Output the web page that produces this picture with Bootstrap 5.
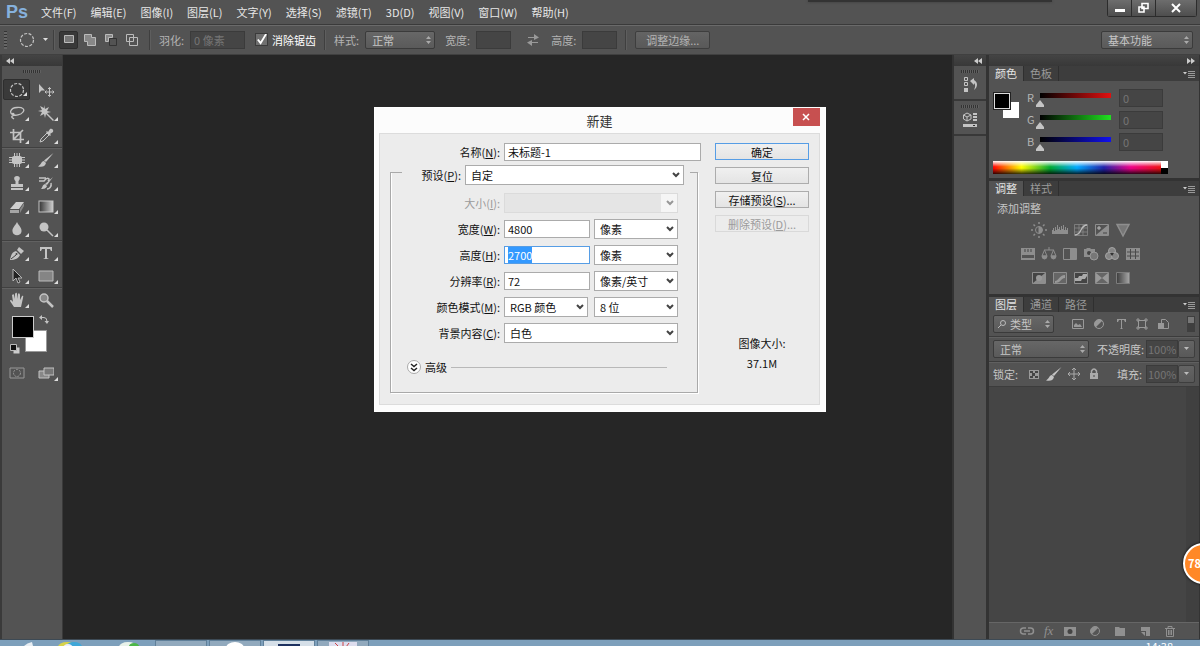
<!DOCTYPE html>
<html lang="zh-CN">
<head>
<meta charset="utf-8">
<meta name="viewport" content="width=device-width, initial-scale=1">
<title>新建</title>
<link href="https://cdn.jsdelivr.net/npm/bootstrap@5.3.0/dist/css/bootstrap.min.css" rel="stylesheet">
<style>
:root{--panel:#535353;--dark:#383838;--ink:#b4b4b4}
body{font-family:"Noto Sans CJK SC",sans-serif;font-size:11px;line-height:16px;background:#262626;color:#ddd}
button,input,select{font:inherit;color:inherit}
svg{display:block}
svg:not([fill]){fill:none}
.i16{width:16px;height:16px;flex:none}
.plain{background:none;border:0;padding:0;display:flex;align-items:center;justify-content:center}

.menubar{height:24px;background:var(--panel)}
.menubar a{color:#e8e8e8;text-decoration:none}
.brand{width:41px;padding-left:6px;font:bold 18px/22px "Liberation Sans",sans-serif;color:#86b1dd}
.topshade{left:808px;width:244px;height:2px;background:#333;box-shadow:0 0 3px #3a3a3a}
.winbtns{height:17px;margin-right:3px;border:1px solid #2c2c2c;border-top:0;border-radius:0 0 3px 3px}
.winbtns button{width:24px;height:16px;background:linear-gradient(#6d6d6d,#4e4e4e);border-right:1px solid #2c2c2c}
.winbtns button:last-child{width:40px;border-right:0}

.optbar{height:31px;background:var(--panel);border-top:1px solid #3a3a3a;box-shadow:inset 0 1px #6a6a6a;border-bottom:1px solid #404040;color:var(--ink)}
.optbar label{white-space:nowrap}
.optbar .cap{margin-right:6px}
.after{margin-right:10px}
.vgrip{width:3px;height:18px;margin:0 12px 0 4px;background:repeating-linear-gradient(#333 0 1px,#666 1px 3px)}
.vsep{width:2px;height:20px;background:#3f3f3f;border-right:1px solid #5e5e5e}
.modes{gap:2px}
.mode{width:19px;height:18px;border-radius:2px}
.mode.on{background:#393939;border:1px solid #2e2e2e}
.dfield{height:18px;background:#454545;border:1px solid #3b3b3b;color:#757575;padding:0 0 0 3px;border-radius:0;min-width:0}
.dselect{height:18px;appearance:none;border:1px solid #3b3b3b;border-radius:2px;padding:0 12px 0 6px;line-height:14px;color:#c6c6c6;
 background:url("data:image/svg+xml,%3Csvg xmlns='http://www.w3.org/2000/svg' width='7' height='8'%3E%3Cpath d='M3.500 0L6 3H1zM3.500 8L6 5H1z' fill='%23aaa'/%3E%3C/svg%3E") no-repeat right 2px center,linear-gradient(#676767,#5a5a5a)}
.dbtn{height:18px;border:1px solid #3e3e3e;border-radius:2px;background:linear-gradient(#646464,#595959);color:var(--ink);padding:0;line-height:14px}
.tick{appearance:none;width:13px;height:13px;margin:0;border:1px solid #3b3b3b;background:#707070 url("data:image/svg+xml,%3Csvg xmlns='http://www.w3.org/2000/svg' viewBox='0 0 12 12'%3E%3Cpath d='M2 6l3 4L11 0' stroke='%23fff' stroke-width='2' fill='none'/%3E%3C/svg%3E") center/11px no-repeat}

.dockhead{height:11px;flex:none;background:linear-gradient(#444,#383838);color:#ccc}
.toolcol{width:63px;background:var(--panel);border-left:2px solid #3a3a3a;border-right:1px solid #3a3a3a}
.hgrip{width:18px;height:3px;background:repeating-linear-gradient(90deg,#333 0 1px,#606060 1px 2px)}
.toolcol .hgrip{margin:4px auto 5px}
.toolgrid{display:grid;grid-template-columns:29px 29px;border-bottom:1px solid #404040;box-shadow:0 1px #616161}
.toolgrid button{height:23px;position:relative}
.toolgrid button.on{background:#3a3a3a;border:1px solid #2e2e2e;border-radius:2px;height:21px;margin:1px}
.more::after{content:"";position:absolute;right:2px;bottom:3px;border:2px solid transparent;border-right-color:#ddd;border-bottom-color:#ddd}
.swatches{height:42px}
.sw{position:absolute;width:22px;height:22px;border:1px solid #999}

.strip{width:34px;background:var(--panel);border-left:2px solid #333}
.strip .cell{height:35px;border-bottom:2px solid var(--dark)}
.dock{width:214px;border-left:3px solid #333;background:var(--panel);border-right:1px solid #333}
.tabs{height:15px;background:#3d3d3d;color:#9a9a9a}
.tabs a{color:inherit;text-decoration:none;padding:0 6px;border-right:1px solid #2f2f2f;line-height:14px}
.tabs a.on{background:var(--panel);color:#e4e4e4}
.pane{border-bottom:3px solid #333}
.chans{padding:8px 4px 6px}
.chan{height:22px;color:var(--ink)}
.chan label{width:9px}
.chan input[type=range]{appearance:none;width:79px;height:14px;margin:0;background:linear-gradient(90deg,#000,var(--c)) 4px 0/71px 5px no-repeat}
.chan input::-webkit-slider-thumb{appearance:none;width:8px;height:7px;margin-top:7px;background:#c4c4c4;clip-path:polygon(50% 0,100% 70%,100% 100%,0 100%,0 70%)}
.chan .dfield{width:44px}
.pair{width:26px;height:26px}
.fgc{position:absolute;left:1px;top:0;width:16px;height:16px;background:#000;border:1px solid #ddd;outline:1px solid #222}
.bgc{position:absolute;left:10px;top:9px;width:16px;height:16px;background:#fff}
.spectrum{width:168px;height:13px;background:linear-gradient(#fff,transparent 45%,transparent 55%,#000c),linear-gradient(90deg,#f00,#ff0 17%,#0a3 34%,#0af 50%,#22a 66%,#e08 82%,#e11)}
.bwend{width:7px;height:13px;background:linear-gradient(#fff 50%,#000 50%)}
.adjtitle{padding:4px 8px 2px;color:#c6c6c6}
.adj{height:24px;gap:5px;margin-right:27px;color:#8e8e8e}
.lrow{height:25px;border-bottom:1px solid #3c3c3c;box-shadow:0 1px #606060;color:#c6c6c6;white-space:nowrap}
.lrow .dfield{width:32px;padding-left:1px}
.lrow .drop{width:17px;height:18px}
.list{background:#454545;border-right:13px solid #404040}
.foot{height:17px;color:#909090;border-top:1px solid #666;padding:0 21px 0 30px}
.fx{font:italic 13px/16px "Liberation Serif",serif}

.taskbar{height:7px;background:#7d9fbb;border-top:1px solid #3d4a55;overflow:hidden}
.tasks{gap:2px}
.task{width:52px;height:7px;background:#91a9bd;border:1px solid #5f7f99;border-bottom:0}
.task.on{background:#d5dfe8}
.clock{color:#fff;line-height:12px;margin-right:27px}

.dlg{top:107px;width:452px;background:#fcfcfc;color:#111;border:1px solid #fff;padding:0 5px 6px 4px}
.dlgtitle{height:25px;font-size:13px;line-height:25px;color:#333}
.dlgclose{position:absolute;top:0;right:5px;width:27px;height:18px;background:#c75050}
.dlgbody{background:#ececec;border:1px solid #dcdcdc;padding:9px 10px 11px}
.lab{width:110px;text-align:right;white-space:nowrap}
.group .lab{width:109px}
.off{color:#9b9b9b}
.wfield,.wselect{height:18px;border:1px solid #ababab;background:#fff;border-radius:0;padding:0 3px;line-height:16px;min-width:0;outline:0}
.wfield{width:86px}
.wfield:focus{border-color:#569de5}
.wfield::selection{background:#3399ff;color:#fff}
.wselect{height:20px;width:84px;appearance:none;padding:0 16px 0 5px;line-height:18px;background:url("data:image/svg+xml,%3Csvg xmlns='http://www.w3.org/2000/svg' width='8' height='6'%3E%3Cpath d='M1 1l3 3 3-3' stroke='%23444' stroke-width='2' fill='none'/%3E%3C/svg%3E") no-repeat right 3px center,linear-gradient(90deg,var(--fill,#fff) calc(100% - 16px),#fff 0)}
.wselect:disabled{--fill:#e0e0e0;border-color:#ccc;opacity:.5}
.wide{width:174px}
.group{border:1px solid #a9a9a9;box-shadow:1px 1px #fff,inset 1px 0 #fff;width:308px;height:228px;padding:0;margin:0}
.group legend{float:none;width:288px;height:14px;margin:0 0 0 11px;padding:0;font-size:11px;line-height:16px}
.rows{gap:6px;padding-top:14px}
.wbtn{height:17px;width:94px;padding:0;border:1px solid #acacac;background:linear-gradient(#f0f0f0,#e4e4e4);line-height:14px}
.wbtn.main{border-color:#569de5}
.wbtn:disabled{border-color:#d9d9d9;background:#ececec;color:#9b9b9b}
.round{width:14px;height:14px;border:1px solid #aaa;border-radius:50%;background:#fff}
.rule{width:216px;height:1px;background:#b8b8b8}
.size{padding-bottom:22px}
.ball{right:-24px;top:543px;width:41px;height:41px;border-radius:50%;background:#ff8827;border:2px solid #fff;box-shadow:0 0 3px #000;color:#fff;font-weight:bold;line-height:36px;padding-left:3px}
</style>
</head>
<body class="vh-100 d-flex flex-column overflow-hidden position-relative">

<svg width="0" height="0" class="position-absolute" aria-hidden="true">
<defs>
<linearGradient id="gr"><stop offset="0" stop-color="#333"/><stop offset="1" stop-color="#ccc"/></linearGradient>
<symbol id="ell" viewBox="0 0 16 16"><circle cx="8" cy="8" r="6.500" stroke="#c4c4c4" stroke-dasharray="3 1.500" stroke-width="1.200"/></symbol>
<symbol id="move" viewBox="0 0 16 16"><path d="M1 2v9l2.500-2.500H7z" fill="#c4c4c4"/><path d="M11.500 5.500v9M7 10h9M10 7l1.500-1.500L13 7M10 13l1.500 1.500L13 13M8.500 8.500L7 10l1.500 1.500M14.500 8.500L16 10l-1.500 1.500" stroke="#c4c4c4"/></symbol>
<symbol id="lasso" viewBox="0 0 16 16"><path d="M4 10C0 8 1 3 8 2.500c6-.5 8 2 6 4.500-2 3-8 4-10 2.500-2-1 1-2 1 0s-3 1-2 3l2 1.500" stroke="#c4c4c4" stroke-width="1.300"/></symbol>
<symbol id="wand" viewBox="0 0 16 16"><path d="M6 0l1 4 4-2-2 4 4 1-4 1 7 7-1 1-7-7-1 4-1-4-4 2 2-4-4-1 4-1-2-4 4 2z" fill="#c4c4c4"/></symbol>
<symbol id="crop" viewBox="0 0 16 16"><path d="M4.500 1v10.500H15M1 4.500h10.500V15M14 2L5 11" stroke="#c4c4c4" stroke-width="1.700"/></symbol>
<symbol id="drop" viewBox="0 0 16 16"><path d="M2 14l1-3 6-6 2 2-6 6z" stroke="#c4c4c4"/><path d="M8 4l1-1 1 1 2-3c2-1 4 1 3 3l-3 2 1 1-1 1z" fill="#c4c4c4"/></symbol>
<symbol id="heal" viewBox="0 0 16 16"><rect x="3" y="4" width="10" height="8" rx="2" fill="#c4c4c4"/><path d="M5.500 1v14M8 1v14M10.500 1v14M0 5.500h16M0 8h16M0 10.500h16" stroke="#c4c4c4"/></symbol>
<symbol id="brush" viewBox="0 0 16 16"><path d="M15.500 1L8 10 6 8.500zM6 9l2 2c-1 4-4 4-8 3.500C3 13 3 9.500 6 9z" fill="#c4c4c4"/></symbol>
<symbol id="stamp" viewBox="0 0 16 16"><path d="M8 1c4 0 3 4 1.500 5v3H14v3H2V9h4.500V6C5 5 4 1 8 1zM2 13h12v2H2z" fill="#c4c4c4"/></symbol>
<symbol id="hist" viewBox="0 0 16 16"><path d="M15 2l-6 8-2-1zM7 9l2 2c-1 3-4 3-6 3 2-2 1-4 4-5z" fill="#c4c4c4"/><path d="M1 3h7M1 6h5c3-4 7-3 4 0M13 8c1 4-2 6-4 6" stroke="#c4c4c4" stroke-width="1.500"/></symbol>
<symbol id="erase" viewBox="0 0 16 16"><path d="M1 11l6-7h8l-5 7z" fill="#d0d0d0"/><path d="M1 12h9v3H1z" fill="#a5a5a5"/><path d="M11 11l4-6v3l-4 7z" fill="#888"/></symbol>
<symbol id="grad" viewBox="0 0 16 16"><rect x="1" y="3" width="14" height="11" fill="url(#gr)" stroke="#c4c4c4"/></symbol>
<symbol id="blur" viewBox="0 0 16 16"><path d="M8 1c2 4 5 6 4.500 9.500-.5 5-8.500 5-9 0C3 7 6 5 8 1z" fill="#c4c4c4"/></symbol>
<symbol id="dodge" viewBox="0 0 16 16"><circle cx="6" cy="6" r="4.500" fill="#c4c4c4"/><path d="M9 9l6 6" stroke="#c4c4c4" stroke-width="1.500"/></symbol>
<symbol id="pen" viewBox="0 0 16 16"><path d="M1 15c1-5 2-8 6-9l4 4c-1 3-5 5-10 5zM8 5l2-3 5 4-3 3z" fill="#c4c4c4"/><path d="M2 14l5-4" stroke="#444"/><circle cx="7.500" cy="9" r="1" fill="#444"/></symbol>
<symbol id="arrow" viewBox="0 0 16 16"><path d="M4 1v12l3-3 2 5 2-1-2-4h4z" fill="#222" stroke="#b5b5b5"/></symbol>
<symbol id="rect" viewBox="0 0 16 16"><path d="M1 3h14v10H1z" fill="#858585" stroke="#bbb"/></symbol>
<symbol id="tee" viewBox="0 0 16 16"><path d="M2 2h12v4h-1l-1-2H9v9l2 1H5l2-1V4H4L3 6H2z" fill="#c4c4c4"/></symbol>
<symbol id="hand" viewBox="0 0 16 16"><path d="M5 15L1 9c0-2 2-1 3 1L3 3c1-1 2-1 2 0l1 4V2c1-2 2-1 2 0v5l1-5c1-2 2 0 2 1v5l2-4c2-1 1 1 1 2l-2 9z" fill="#c4c4c4"/></symbol>
<symbol id="zoom" viewBox="0 0 16 16"><circle cx="6" cy="6" r="4" fill="#888" stroke="#c4c4c4" stroke-width="1.500"/><path d="M9 9l6 6" stroke="#c4c4c4" stroke-width="2.500"/></symbol>
<symbol id="mask" viewBox="0 0 16 16"><path d="M1 3h14v10H1z" stroke="#999"/><circle cx="8" cy="8" r="3.500" stroke="#999" stroke-dasharray="2 1"/></symbol>
<symbol id="screen" viewBox="0 0 16 16"><path d="M1 6h10v7H1z" fill="#888" stroke="#c4c4c4"/><path d="M6 3h10v7H6z" fill="#777" stroke="#c4c4c4"/></symbol>
<symbol id="menu" viewBox="0 0 12 8"><path d="M0 2h4L2 4.500z" fill="#ccc"/><path d="M5 1.500h7M5 3.500h7M5 5.500h7M5 7.500h7" stroke="#999"/></symbol>
<symbol id="half" viewBox="0 0 16 16"><circle cx="8" cy="8" r="4.500" fill="#555" stroke="currentColor"/><path d="M11.500 4.500a5 5 0 0 0-7 7z" fill="currentColor"/></symbol>
<symbol id="back" viewBox="0 0 8 6"><path d="M4 0v6L0 3zM8 0v6L4 3z" fill="#ccc"/></symbol>
</defs>
</svg>

<nav class="menubar d-flex align-items-center flex-shrink-0">
 <span class="brand">Ps</span>
 <div class="d-flex flex-grow-1" style="gap:14px">
  <a href="#">文件(F)</a><a href="#">编辑(E)</a><a href="#">图像(I)</a><a href="#">图层(L)</a><a href="#">文字(Y)</a><a href="#">选择(S)</a><a href="#">滤镜(T)</a><a href="#">3D(D)</a><a href="#">视图(V)</a><a href="#">窗口(W)</a><a href="#">帮助(H)</a>
 </div>
 <div class="topshade position-absolute top-0"></div>
 <div class="winbtns d-flex align-self-start">
  <button class="plain" aria-label="最小化"><svg class="i16"><path d="M3 9h10v3H3z" fill="#fff"/></svg></button>
  <button class="plain" aria-label="还原"><svg class="i16"><path d="M6 3.500h6v5H6zM3 7h5v5H3z" stroke="#fff" stroke-width="1.600"/></svg></button>
  <button class="plain" aria-label="关闭"><svg class="i16"><path d="M4 4l8 8M12 4l-8 8" stroke="#fff" stroke-width="2"/></svg></button>
 </div>
</nav>

<div class="optbar d-flex align-items-center flex-shrink-0">
 <span class="vgrip"></span>
 <button class="plain" aria-label="椭圆选框"><svg class="i16"><use href="#ell"/></svg><svg class="ms-2" width="6" height="4"><path d="M0 0h5L2.500 3z" fill="#ddd"/></svg></button>
 <span class="vsep ms-1 me-1"></span>
 <div class="modes d-flex me-2">
  <button class="plain mode on" aria-label="新选区"><svg class="i16"><path d="M3.500 3.500h9v7h-9z" fill="#777" stroke="#bbb"/></svg></button>
  <button class="plain mode" aria-label="添加到选区"><svg class="i16"><path d="M2.500 2.500h7v3h4v8h-8v-4h-3z" fill="#888" stroke="#bbb"/></svg></button>
  <button class="plain mode" aria-label="从选区减去"><svg class="i16"><path d="M2.500 2.500h7v3h-4v4h-3z" fill="#888" stroke="#bbb"/><path d="M6.500 6.500h7v7h-7z" stroke="#333"/></svg></button>
  <button class="plain mode" aria-label="与选区交叉"><svg class="i16"><path d="M2.500 2.500h7v7h-7zM5.500 5.500h8v8h-8z" stroke="#bbb"/></svg></button>
 </div>
 <span class="vsep me-2"></span>
 <label for="feather" class="cap">羽化:</label><input id="feather" class="dfield after" style="width:55px" value="0 像素" disabled>
 <input type="checkbox" id="aa" class="tick me-1" checked><label for="aa" class="text-white">消除锯齿</label>
 <span class="vsep ms-2 me-2"></span>
 <label for="sty" class="cap">样式:</label><select id="sty" class="dselect after" style="width:70px"><option>正常</option></select>
 <label for="ow" class="cap">宽度:</label><input id="ow" class="dfield after" style="width:35px" disabled>
 <svg class="i16 after ms-1"><path d="M3 5.500h9M4 10.500h9" stroke="#999"/><path d="M9 2l5 3.500L9 8zM7 8l-5 2.500L7 14z" fill="#999"/></svg>
 <label for="oh" class="cap">高度:</label><input id="oh" class="dfield me-2" style="width:35px" disabled>
 <span class="vsep me-2"></span>
 <button class="dbtn" style="width:75px">调整边缘...</button>
 <select class="dselect ms-auto" style="width:92px;margin-right:7px" aria-label="工作区"><option>基本功能</option></select>
</div>

<main class="d-flex flex-grow-1" style="min-height:0">
 <aside class="toolcol d-flex flex-column">
  <div class="dockhead d-flex align-items-center ps-1"><svg width="8" height="6"><use href="#back"/></svg></div>
  <div class="hgrip"></div>
  <div class="toolgrid">
   <button class="plain on more" aria-label="选框"><svg class="i16"><use href="#ell"/></svg></button><button class="plain" aria-label="移动"><svg class="i16"><use href="#move"/></svg></button>
   <button class="plain more" aria-label="套索"><svg class="i16"><use href="#lasso"/></svg></button><button class="plain more" aria-label="魔棒"><svg class="i16"><use href="#wand"/></svg></button>
   <button class="plain more" aria-label="裁剪"><svg class="i16"><use href="#crop"/></svg></button><button class="plain more" aria-label="吸管"><svg class="i16"><use href="#drop"/></svg></button>
  </div>
  <div class="toolgrid">
   <button class="plain more" aria-label="修复"><svg class="i16"><use href="#heal"/></svg></button><button class="plain more" aria-label="画笔"><svg class="i16"><use href="#brush"/></svg></button>
   <button class="plain more" aria-label="图章"><svg class="i16"><use href="#stamp"/></svg></button><button class="plain more" aria-label="历史画笔"><svg class="i16"><use href="#hist"/></svg></button>
   <button class="plain more" aria-label="橡皮擦"><svg class="i16"><use href="#erase"/></svg></button><button class="plain more" aria-label="渐变"><svg class="i16"><use href="#grad"/></svg></button>
   <button class="plain more" aria-label="模糊"><svg class="i16"><use href="#blur"/></svg></button><button class="plain more" aria-label="减淡"><svg class="i16"><use href="#dodge"/></svg></button>
  </div>
  <div class="toolgrid">
   <button class="plain more" aria-label="钢笔"><svg class="i16"><use href="#pen"/></svg></button><button class="plain more" aria-label="文字"><svg class="i16"><use href="#tee"/></svg></button>
   <button class="plain more" aria-label="路径选择"><svg class="i16"><use href="#arrow"/></svg></button><button class="plain more" aria-label="矩形"><svg class="i16"><use href="#rect"/></svg></button>
  </div>
  <div class="toolgrid border-0 shadow-none">
   <button class="plain more" aria-label="抓手"><svg class="i16"><use href="#hand"/></svg></button><button class="plain" aria-label="缩放"><svg class="i16"><use href="#zoom"/></svg></button>
  </div>
  <div class="swatches position-relative mt-1 mb-1">
   <span class="sw" style="left:23px;top:15px;background:#fff"></span>
   <span class="sw" style="left:10px;top:1px;background:#000;border-color:#ccc"></span>
   <svg class="position-absolute" style="left:37px;top:0" width="10" height="10"><path d="M2 2.500h3q3 0 3 4" stroke="#c4c4c4"/><path d="M0 2.500L3 0v5zM5.500 6H10L8 9z" fill="#c4c4c4"/></svg>
   <svg class="position-absolute" style="left:8px;top:29px" width="10" height="10"><path d="M3.500 3.500h6v6h-6z" fill="#ccc"/><path d="M.5.5h6v6h-6z" fill="#111" stroke="#bbb"/></svg>
  </div>
  <div class="toolgrid border-0 shadow-none">
   <button class="plain" aria-label="快速蒙版"><svg class="i16"><use href="#mask"/></svg></button><button class="plain more" aria-label="屏幕模式"><svg class="i16"><use href="#screen"/></svg></button>
  </div>
 </aside>

 <div class="flex-grow-1"></div>

 <aside class="strip">
  <div class="dockhead d-flex align-items-center justify-content-end pe-1"><svg width="8" height="6"><use href="#back"/></svg></div>
  <div class="cell d-flex flex-column align-items-center pt-1"><div class="hgrip mb-1"></div><button class="plain" aria-label="历史记录"><svg class="i16"><path d="M2.500.5h3v3h-3zM2.500 5.500h3v3h-3z" stroke="#c4c4c4"/><path d="M2 11h4v4H2zM8 4l4-3v2c4 2 4 7 0 10 2-4 1-6 0-7v2z" fill="#c4c4c4"/></svg></button></div>
  <div class="cell d-flex flex-column align-items-center pt-1"><div class="hgrip mb-1"></div><button class="plain" aria-label="属性"><svg class="i16"><path d="M1.500 3L5 1l4 2v4L5 9 1.500 7zM1.500 3L5 5l4-2M5 5v4" stroke="#c4c4c4"/><path d="M11 1h4v2h-4zM11 4h4v2h-4zM11 7h4v2h-4zM1 12h14v3H1z" fill="#c4c4c4"/><path d="M11 13h2v1h-2z" fill="#333"/></svg></button></div>
 </aside>

 <aside class="dock d-flex flex-column">
  <div class="dockhead d-flex align-items-center justify-content-end pe-1"><svg width="8" height="6"><path d="M0 0v6l4-3zM4 0v6l4-3z" fill="#ccc"/></svg></div>
  <section class="pane">
   <div class="tabs d-flex"><a href="#" class="on">颜色</a><a href="#">色板</a><button class="plain ms-auto me-1" aria-label="菜单"><svg width="12" height="8"><use href="#menu"/></svg></button></div>
   <div class="chans d-flex">
    <div class="pair position-relative me-2 mt-1"><span class="bgc"></span><span class="fgc"></span></div>
    <div>
     <div class="chan d-flex align-items-start"><label for="r">R</label><input type="range" id="r" value="0" max="255" class="mt-1" style="--c:#e01010"><input class="dfield ms-1" value="0" aria-label="R 值" disabled></div>
     <div class="chan d-flex align-items-start"><label for="g">G</label><input type="range" id="g" value="0" max="255" class="mt-1" style="--c:#20e020"><input class="dfield ms-1" value="0" aria-label="G 值" disabled></div>
     <div class="chan d-flex align-items-start"><label for="b">B</label><input type="range" id="b" value="0" max="255" class="mt-1" style="--c:#1010f0"><input class="dfield ms-1" value="0" aria-label="B 值" disabled></div>
    </div>
   </div>
   <div class="d-flex pb-1 ps-1"><div class="spectrum"></div><div class="bwend"></div></div>
  </section>
  <section class="pane pb-1">
   <div class="tabs d-flex"><a href="#" class="on">调整</a><a href="#">样式</a><button class="plain ms-auto me-1" aria-label="菜单"><svg width="12" height="8"><use href="#menu"/></svg></button></div>
   <div class="adjtitle">添加调整</div>
   <div class="adj d-flex justify-content-center align-items-center">
    <svg class="i16" stroke="currentColor"><circle cx="8" cy="8" r="3.500"/><path d="M8 5a3 3 0 0 1 0 6z" fill="currentColor"/><path d="M8 0v2M8 14v2M0 8h2M14 8h2M2.500 2.500L4 4M12 12l1.500 1.500M13.500 2.500L12 4M4 12l-1.500 1.500" stroke-width="1.500"/></svg>
    <svg class="i16"><path d="M0 12V8h1V6h1v3h1V5h1v3h1V3h1v4h1V5h1v3h1V4h1v3h1V3h1v5h1V5h1v3h1V6h1v6z" fill="currentColor"/></svg>
    <svg class="i16" stroke="currentColor"><path d="M1.500 2.500h13v11h-13zM6 2.500v11M10 2.500v11M1.500 6h13M1.500 10h13" opacity=".7"/><path d="M2 13c7 0 5-10 12-10" stroke="#bbb" stroke-width="1.300"/></svg>
    <svg class="i16"><path d="M1.500 2.500h13v11h-13z" stroke="currentColor"/><path d="M14 3v10H2z" fill="currentColor"/><path d="M3 6h4M5 4v4" stroke="#bbb"/><path d="M9 11h4" stroke="#444"/></svg>
    <svg class="i16"><path d="M2 2.500h12L8 14z" fill="#777" stroke="currentColor" stroke-width="1.500"/></svg>
   </div>
   <div class="adj d-flex justify-content-center align-items-center">
    <svg class="i16"><path d="M1 2h14v12H1z" fill="currentColor"/><path d="M2 9h12v3H2z" fill="#555"/><path d="M5 3v3M8 3v3M11 3v3" stroke="#444"/></svg>
    <svg class="i16" stroke="currentColor"><path d="M8 1v3M3 4h10M3.500 4L1 10h5zM12.500 4L10 10h5z"/><path d="M1 10h5q0 3-2.500 3T1 10zM10 10h5q0 3-2.500 3T10 10z" fill="currentColor"/></svg>
    <svg class="i16"><path d="M1.500 2.500h13v11h-13z" stroke="currentColor"/><path d="M8 3h6v10H8z" fill="currentColor"/></svg>
    <svg class="i16"><path d="M1 3h2l1-1h3l1 1h4v8H1z" fill="currentColor"/><circle cx="6" cy="7" r="2" fill="#444"/><circle cx="11" cy="10" r="4" fill="#777" stroke="#999"/></svg>
    <svg class="i16"><g fill="#858585" stroke="#a5a5a5"><circle cx="8" cy="5" r="3.500"/><circle cx="5" cy="10" r="3.500"/><circle cx="11" cy="10" r="3.500"/></g><path d="M6 7h4l-2 3z" fill="#333"/></svg>
    <svg class="i16"><path d="M1 2h14v12H1z" fill="currentColor"/><path d="M5.500 3v10M10.500 3v10M2 6h12M2 10h12" stroke="#4a4a4a"/></svg>
   </div>
   <div class="adj d-flex justify-content-center align-items-center">
    <svg class="i16"><path d="M1.500 2.500h13v11h-13z" stroke="currentColor" fill="#444"/><path d="M14 3L2 13h12z" fill="currentColor"/><circle cx="8" cy="8" r="3" fill="#999"/></svg>
    <svg class="i16"><path d="M1.500 2.500h13v11h-13z" stroke="currentColor" fill="#666"/><path d="M3 11c4 0 4-6 10-6v3c-4 0-4 5-10 5z" fill="#999"/></svg>
    <svg class="i16"><path d="M1.500 2.500h13v11h-13z" stroke="currentColor" fill="#444"/><path d="M2 8h3l1-2h3l1-2h4v2l-2 3H9l-1 2H2z" fill="#aaa"/></svg>
    <svg class="i16"><path d="M1.500 2.500h13v11h-13z" stroke="currentColor" fill="#666"/><path d="M2 3l12 10V3L2 13z" fill="#999"/></svg>
    <svg class="i16"><path d="M1.500 2.500h13v11h-13z" stroke="currentColor" fill="url(#gr)" opacity=".7"/></svg>
   </div>
  </section>
  <section class="d-flex flex-column flex-grow-1">
   <div class="tabs d-flex"><a href="#" class="on">图层</a><a href="#">通道</a><a href="#">路径</a><button class="plain ms-auto me-1" aria-label="菜单"><svg width="12" height="8"><use href="#menu"/></svg></button></div>
   <div class="lrow d-flex align-items-center ps-1 pe-1">
    <span class="position-relative"><select class="dselect ps-3" style="width:61px" aria-label="类型"><option>类型</option></select><svg class="position-absolute top-0 mt-1" style="left:4px" width="10" height="10" stroke="#bbb"><circle cx="6" cy="4" r="2.500"/><path d="M4 6L1 9"/></svg></span>
    <div class="d-flex gap-1 ms-3 flex-grow-1 justify-content-between pe-3" style="color:#999">
     <svg class="i16"><path d="M2.500 3.500h11v9h-11z" stroke="currentColor"/><path d="M4 11V9l2-2 2 2 2-1 2 3z" fill="currentColor"/></svg>
     <svg class="i16"><use href="#half"/></svg>
     <svg class="i16"><path d="M4 3h9v3h-1l-1-2H9v8l1 1H7l1-1V4H6L5 6H4z" fill="currentColor"/></svg>
     <svg class="i16" stroke="currentColor"><path d="M4.500 4.500h7v7h-7z"/><path d="M3 3h2v2H3zM11 3h2v2h-2zM3 11h2v2H3zM11 11h2v2h-2z"/></svg>
     <svg class="i16"><path d="M6.500 3.500h4l3 3v6h-7z" stroke="currentColor"/><path d="M3 7h6v6H3z" fill="currentColor"/></svg>
    </div>
    <svg width="8" height="16"><path d="M0 0h8v16H0z" fill="#3f3f3f"/><path d="M1 1h6v6H1z" fill="#777"/></svg>
   </div>
   <div class="lrow d-flex align-items-center ps-1">
    <select class="dselect" style="width:96px" aria-label="混合模式"><option>正常</option></select>
    <label for="op" class="ms-2">不透明度:</label><input id="op" class="dfield ms-auto" value="100%" disabled><button class="dbtn drop plain me-1" aria-label="展开"><svg width="6" height="4"><path d="M0 0h5L2.500 3z" fill="#bbb"/></svg></button>
   </div>
   <div class="lrow d-flex align-items-center ps-1">
    <span>锁定:</span>
    <div class="d-flex gap-1 ms-1 ps-1" style="color:#aaa">
     <svg class="i16"><path d="M3 4h10v9H3z" fill="#999"/><path d="M4 5h3v2H4zM9 5h3v2H9zM6 7h3v3H6zM4 10h3v2H4zM9 10h3v2H9z" fill="#444"/></svg>
     <svg class="i16"><use href="#brush"/></svg>
     <svg class="i16" stroke="currentColor"><path d="M8 2v12M2 8h12M6 4l2-2 2 2M6 12l2 2 2-2M4 6L2 8l2 2M12 6l2 2-2 2"/></svg>
     <svg class="i16"><path d="M4 7h8v6H4z" fill="currentColor"/><path d="M5.500 7V5q2.500-4 5 0v2" stroke="currentColor" stroke-width="1.500"/><path d="M7.500 9h1v2h-1z" fill="#444"/></svg>
    </div>
    <label for="fi" class="ms-auto me-1">填充:</label><input id="fi" class="dfield" value="100%" disabled><button class="dbtn drop plain me-1" aria-label="展开"><svg width="6" height="4"><path d="M0 0h5L2.500 3z" fill="#bbb"/></svg></button>
   </div>
   <div class="list flex-grow-1"></div>
   <div class="foot d-flex align-items-center justify-content-between">
    <svg class="i16" stroke="currentColor" stroke-width="1.500"><path d="M7 5H4.500a3 3 0 0 0 0 6H7M9 5h2.500a3 3 0 0 1 0 6H9M5 8h6"/></svg>
    <span class="fx">fx</span>
    <svg class="i16"><path d="M2 4h12v9H2z" fill="currentColor"/><circle cx="8" cy="8.500" r="2.500" fill="#444"/></svg>
    <svg class="i16"><use href="#half"/></svg>
    <svg class="i16"><path d="M3 4h4l1 1h5v8H3z" fill="currentColor"/></svg>
    <svg class="i16"><path d="M4 4h9v9h-4V8H4z" fill="currentColor"/><path d="M4 9h4v4z" fill="currentColor"/></svg>
    <svg class="i16" stroke="currentColor"><path d="M3 5.500h10M6 5V3.500h4V5M4.500 6v7.500h7V6M6.500 7v5M8 7v5M9.500 7v5"/></svg>
   </div>
  </section>
 </aside>
</main>

<footer class="taskbar d-flex flex-shrink-0">
 <svg width="155" height="6"><path d="M24 6q3-3 8-4l1 4z" fill="#e8eef3"/><ellipse cx="67" cy="7" rx="9" ry="5" fill="#d8d34a"/><ellipse cx="74" cy="7" rx="8" ry="5" fill="#3fa7d8"/><ellipse cx="68" cy="8" rx="5" ry="4" fill="#eef"/><ellipse cx="128" cy="7" rx="9" ry="5" fill="#e9f2ea"/><ellipse cx="134" cy="6" rx="5" ry="3" fill="#4cb648"/></svg>
 <div class="tasks d-flex">
  <div class="task"></div>
  <div class="task"><svg class="mx-auto" width="20" height="6"><ellipse cx="10" cy="7" rx="9" ry="6" fill="#fff"/></svg></div>
  <div class="task on"><svg class="mx-auto" width="22" height="6"><path d="M0 3h22v4H0z" fill="#1e3260"/></svg></div>
  <div class="task"><svg class="mx-auto" width="28" height="6"><path d="M0 1h28v6H0z" fill="#dde"/><path d="M6 2l4 4M14 1v5M20 2l-3 4" stroke="#c44"/></svg></div>
 </div>
 <span class="clock ms-auto">14:38</span>
</footer>

<form class="dlg position-absolute start-50 translate-middle-x" role="dialog" aria-labelledby="dt">
 <div class="dlgtitle text-center" id="dt">新建</div>
 <button type="button" class="dlgclose plain" aria-label="关闭"><svg width="9" height="9"><path d="M1 1l6 6M7 1L1 7" stroke="#fff" stroke-width="1.500"/></svg></button>
 <div class="dlgbody d-flex justify-content-between">
  <div>
   <div class="d-flex gap-1 align-items-center"><label class="lab" for="nm">名称(<u>N</u>):</label><input class="wfield" id="nm" style="width:197px" value="未标题-1"></div>
   <fieldset class="group mt-1">
    <legend><span class="d-flex align-items-center gap-1"><label for="ps" style="width:59px" class="text-end">预设(<u>P</u>):</label><select class="wselect" id="ps" style="width:219px"><option>自定</option></select></span></legend>
    <div class="rows d-flex flex-column">
     <div class="d-flex gap-1 align-items-center"><label class="lab off" for="sz">大小(<u>I</u>):</label><select class="wselect wide" id="sz" disabled><option></option></select></div>
     <div class="d-flex gap-1 align-items-center"><label class="lab" for="w">宽度(<u>W</u>):</label><input class="wfield" id="w" value="4800"><select class="wselect" aria-label="宽度单位"><option>像素</option></select></div>
     <div class="d-flex gap-1 align-items-center"><label class="lab" for="h">高度(<u>H</u>):</label><input class="wfield" id="h" value="2700"><select class="wselect" aria-label="高度单位"><option>像素</option></select></div>
     <div class="d-flex gap-1 align-items-center"><label class="lab" for="res">分辨率(<u>R</u>):</label><input class="wfield" id="res" value="72"><select class="wselect" aria-label="分辨率单位"><option>像素/英寸</option></select></div>
     <div class="d-flex gap-1 align-items-center"><label class="lab" for="cm">颜色模式(<u>M</u>):</label><select class="wselect me-auto" id="cm"><option>RGB 颜色</option></select><select class="wselect" style="margin-right:19px" aria-label="位深"><option>8 位</option></select></div>
     <div class="d-flex gap-1 align-items-center"><label class="lab" for="bgd">背景内容(<u>C</u>):</label><select class="wselect wide" id="bgd"><option>白色</option></select></div>
    </div>
    <div class="d-flex align-items-center gap-1 ps-3 pt-3"><button type="button" class="plain round" id="adv" aria-label="展开高级选项"><svg width="8" height="9"><path d="M1 1l3 2.500L7 1M1 5l3 2.500L7 5" stroke="#222" stroke-width="1.500"/></svg></button><label for="adv">高级</label><span class="rule"></span></div>
   </fieldset>
  </div>
  <div class="d-flex flex-column align-items-center">
   <div class="d-flex flex-column" style="gap:7px">
    <button type="button" class="wbtn main">确定</button><button type="button" class="wbtn">复位</button><button type="button" class="wbtn">存储预设(<u>S</u>)...</button><button type="button" class="wbtn" disabled>删除预设(<u>D</u>)...</button>
   </div>
   <div class="size mt-auto text-center"><div class="mb-1">图像大小:</div><div>37.1M</div></div>
  </div>
 </div>
</form>

<div class="ball position-absolute">78</div>

<script src="https://cdn.jsdelivr.net/npm/bootstrap@5.3.0/dist/js/bootstrap.bundle.min.js"></script>
<script>
const h = document.getElementById('h');
h.focus();
h.select();
</script>
</body>
</html>
